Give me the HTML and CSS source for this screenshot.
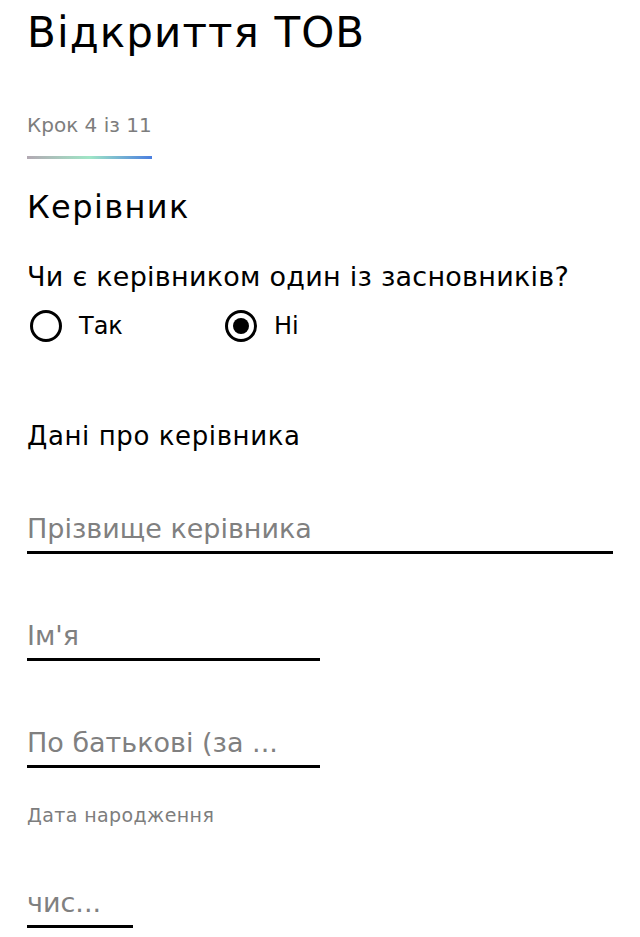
FILE: index.html
```html
<!DOCTYPE html>
<html lang="uk">

<head>
    <meta charset="UTF-8">
    <meta name="viewport" content="width=device-width, initial-scale=1.0">
    <title>Відкриття ТОВ</title>
    <link rel="stylesheet" href="styles.css">
</head>

<body>
    <div class="page">
        <h1 class="title">Відкриття ТОВ</h1>

        <div class="step">Крок 4 із 11</div>
        <div class="step-line"></div>

        <h2 class="section-title">Керівник</h2>

        <div class="question">Чи є керівником один із засновників?</div>
        <div class="radios">
            <label class="radio">
                <span class="radio-circle"></span>
                <span>Так</span>
            </label>
            <label class="radio">
                <span class="radio-circle checked"></span>
                <span>Ні</span>
            </label>
        </div>

        <h3 class="subtitle">Дані про керівника</h3>

        <div class="field field-full">
            <span class="placeholder">Прізвище керівника</span>
        </div>
        <div class="field field-half">
            <span class="placeholder">Ім'я</span>
        </div>
        <div class="field field-half">
            <span class="placeholder">По батькові (за ...</span>
        </div>

        <div class="small-label">Дата народження</div>
        <div class="field field-date">
            <span class="placeholder">чис...</span>
        </div>
    </div>
</body>

</html>
```

FILE: styles.css
```css
body {
    margin: 0;
    background: #fff;
    color: #000;
    font-family: "DejaVu Sans", "Liberation Sans", sans-serif;
}

.page {
    padding: 0 27px;
}

.title {
    margin: 0;
    padding-top: 9px;
    font-size: 42px;
    font-weight: 400;
    line-height: 48px;
    letter-spacing: 1.1px;
}

.step {
    margin-top: 56px;
    font-size: 20px;
    line-height: 24px;
    color: #7d7d7d;
}

.step-line {
    width: 125px;
    height: 3px;
    margin-top: 19px;
    background: linear-gradient(to right, #b3a9b3, #9fe6c6 50%, #4a7ee0);
}

.section-title {
    margin: 30px 0 0;
    font-size: 32px;
    font-weight: 400;
    line-height: 36px;
    letter-spacing: 1.4px;
}

.question {
    margin-top: 36px;
    font-size: 27px;
    line-height: 32px;
    letter-spacing: 0.25px;
}

.radios {
    display: flex;
    margin-top: 17px;
    padding-left: 3px;
}

.radio {
    display: flex;
    align-items: center;
    gap: 17px;
    width: 195px;
    font-size: 24px;
    line-height: 32px;
}

.radio-circle {
    width: 26px;
    height: 26px;
    border: 3px solid #000;
    border-radius: 50%;
    display: flex;
    justify-content: center;
    align-items: center;
}

.radio-circle.checked::after {
    content: "";
    width: 16px;
    height: 16px;
    border-radius: 50%;
    background: #000;
}

.subtitle {
    margin: 79px 0 0;
    font-size: 26px;
    font-weight: 400;
    line-height: 30px;
    letter-spacing: 0.6px;
}

.field {
    border-bottom: 3px solid #000;
    padding-bottom: 6px;
    font-size: 27px;
    line-height: 32px;
}

.field-full {
    margin-top: 62px;
}

.field-half {
    width: 293px;
    margin-top: 66px;
}

.field-date {
    width: 106px;
    margin-top: 61px;
}

.placeholder {
    color: #808080;
}

.small-label {
    margin-top: 36px;
    font-size: 19px;
    line-height: 22px;
    letter-spacing: 0.4px;
    color: #7d7d7d;
}
```
